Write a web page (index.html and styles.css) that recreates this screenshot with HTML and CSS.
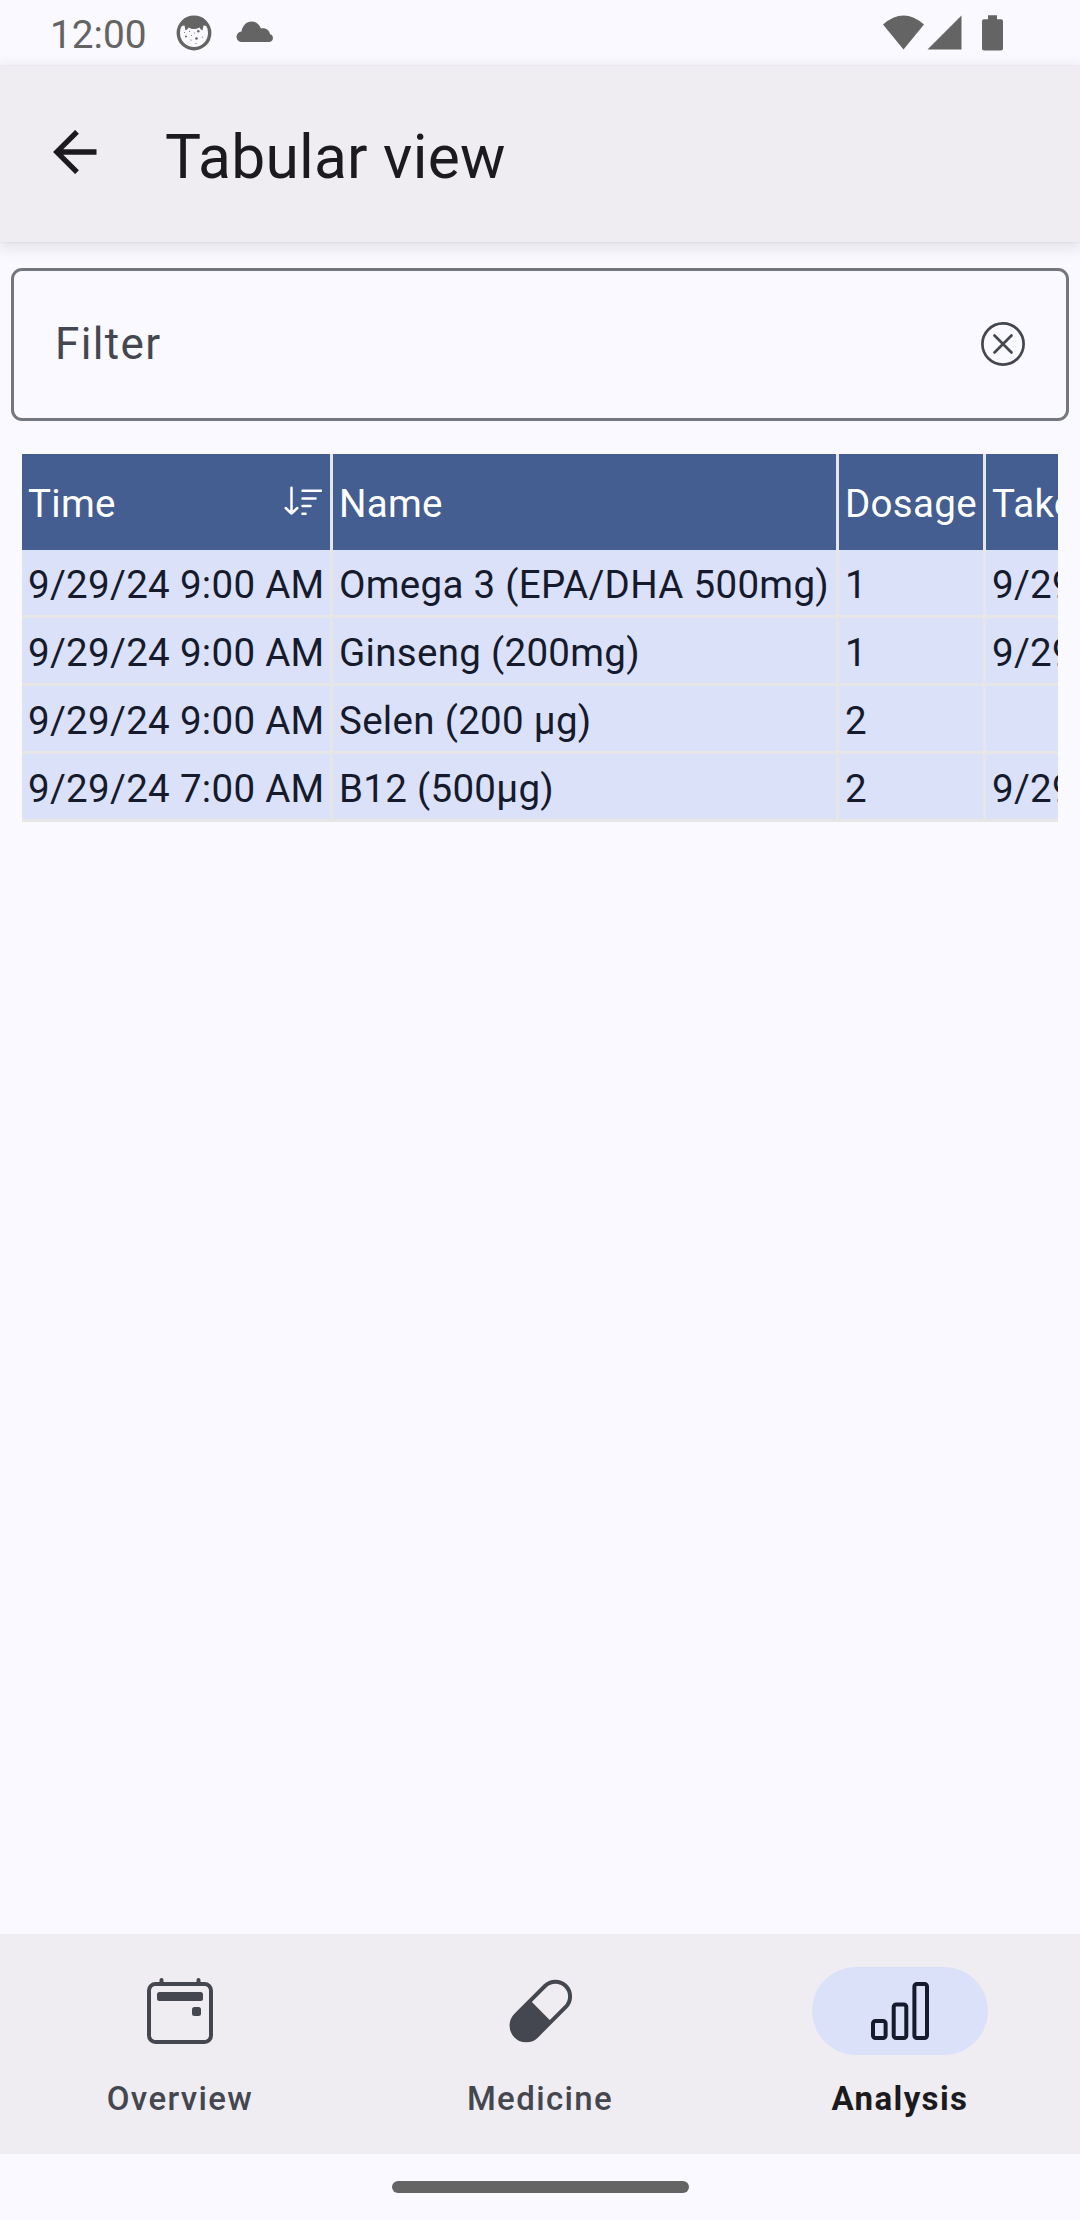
FILE: index.html
```html
<!DOCTYPE html>
<html lang="en">
<head>
<meta charset="utf-8">
<title>Tabular view</title>
<link rel="stylesheet" href="styles.css">
</head>
<body>
<header class="status">
  <span class="clock">12:00</span>
  <svg class="status-face" width="36" height="36" viewBox="0 0 36 36">
    <circle cx="18" cy="18" r="15.7" fill="none" stroke="#646464" stroke-width="3.4"/>
    <path d="M6 11C7 1 29 1 30 11L27.500 10.500L26.500 15.500L24.500 14L23.500 12.500Q18 15.500 12.500 12.500L11.500 14L9.500 15.500L8.500 10.500Z" fill="#646464"/>
    <g fill="#646464"><circle cx="10" cy="21.500" r="1"/><circle cx="20.500" cy="23.500" r="1.300"/><circle cx="22.300" cy="16.300" r="1.200"/><circle cx="15" cy="25" r=".6"/><circle cx="26.500" cy="22" r=".6"/><circle cx="8.500" cy="17.500" r=".5"/><circle cx="18.500" cy="18" r=".5"/><circle cx="13.500" cy="16.500" r=".6"/><circle cx="15.500" cy="20.500" r=".5"/><circle cx="20" cy="28.500" r=".6"/></g>
  </svg>
  <svg class="status-cloud" width="38" height="22" viewBox="0 0 38 22"><path d="M6 21A5.200 5.200 0 0 1 5.500 10.500C6.500 4.500 10.500.500 15.500.500C20 .500 23.500 3.500 25 7.500C30 6.500 33.500 9.500 34 13.200A4 4 0 0 1 33.500 21Z" fill="#646464"/></svg>
  <svg class="status-system" width="122" height="38" viewBox="0 0 122 38" fill="#646464">
    <path d="M1 10.500Q21.500-7.500 42 10.500L21.500 35.500Z"/>
    <path d="M45.500 35.500L79.500 1.500V35.500Z"/>
    <path d="M106 1.200h9v4h4a2 2 0 0 1 2 2V34.500a2 2 0 0 1-2 2h-17a2 2 0 0 1-2-2V7.200a2 2 0 0 1 2-2h4z"/>
  </svg>
</header>
<div class="appbar">
  <svg class="back" width="44" height="44" viewBox="0 0 44 44" fill="none" stroke="#1b1b1f" stroke-width="5.300"><path d="M43.500 22H4M24 1.800L3.800 22L24 42.200"/></svg>
  <h1 class="title">Tabular view</h1>
</div>
<main class="content">
  <div class="filter">
    <span class="filter-label">Filter</span>
    <svg class="clear" width="44" height="44" viewBox="0 0 44 44" fill="none" stroke="#44474f" stroke-width="2.700" stroke-linecap="round"><circle cx="22" cy="22" r="20.600"/><path d="M13.500 13.500L30.500 30.500M30.500 13.500L13.500 30.500"/></svg>
  </div>
  <div class="table-view">
    <table class="grid">
      <colgroup><col class="col-time"><col class="col-name"><col class="col-dosage"><col class="col-taken"></colgroup>
      <thead>
        <tr>
          <th><div class="sorted">Time<svg class="sort-icon" width="38" height="30" viewBox="0 0 38 30" fill="none" stroke="#fff" stroke-width="2.500" stroke-linecap="round" stroke-linejoin="round"><path d="M7.500 1.700V27.500M1.700 22L7.500 27.500L13.300 22M18.500 4.700H37M18.500 12.400H31.500M18.500 20H26.500M18.500 27.700H21.500"/></svg></div></th>
          <th>Name</th><th>Dosage</th><th>Taken</th>
        </tr>
      </thead>
      <tbody>
        <tr><td>9/29/24 9:00 AM</td><td>Omega 3 (EPA/DHA 500mg)</td><td>1</td><td>9/29/24</td></tr>
        <tr><td>9/29/24 9:00 AM</td><td>Ginseng (200mg)</td><td>1</td><td>9/29/24</td></tr>
        <tr><td>9/29/24 9:00 AM</td><td>Selen (200 µg)</td><td>2</td><td></td></tr>
        <tr><td>9/29/24 7:00 AM</td><td>B12 (500µg)</td><td>2</td><td>9/29/24</td></tr>
      </tbody>
    </table>
  </div>
</main>
<nav class="nav">
  <div class="nav-item">
    <div class="nav-icon"><svg width="66" height="66" viewBox="0 0 66 66"><rect x="2" y="6" width="62" height="58" rx="6.500" fill="none" stroke="#44474f" stroke-width="4"/><path d="M14.500 2V6M51.500 2V6" stroke="#44474f" stroke-width="4" stroke-linecap="round"/><rect x="10" y="14" width="46" height="9" rx="2.500" fill="#44474f"/><rect x="45" y="29" width="9" height="9" rx="2.500" fill="#44474f"/></svg></div>
    <span class="nav-label">Overview</span>
  </div>
  <div class="nav-item">
    <div class="nav-icon"><svg width="66" height="66" viewBox="0 0 66 66"><g transform="translate(33.800 33) rotate(45)"><rect x="-14.700" y="-35.300" width="29.400" height="70.600" rx="14.700" fill="none" stroke="#44474f" stroke-width="4"/><path d="M-14.700 0H14.700V20.600A14.700 14.700 0 0 1-14.700 20.600Z" fill="#44474f"/></g></svg></div>
    <span class="nav-label">Medicine</span>
  </div>
  <div class="nav-item active">
    <div class="nav-icon"><svg width="66" height="66" viewBox="0 0 66 66" fill="none" stroke="#151b2c" stroke-width="4"><rect x="6" y="43" width="12.600" height="17" rx="2.500"/><rect x="26.700" y="26.500" width="12.600" height="33.500" rx="2.500"/><rect x="47.400" y="6" width="12.600" height="54" rx="2.500"/></svg></div>
    <span class="nav-label">Analysis</span>
  </div>
</nav>
<footer class="gesture"><div class="handle"></div></footer>
</body>
</html>
```
FILE: styles.css
```css
* { box-sizing: border-box; }
body {
  margin: 0;
  width: 1080px;
  height: 2220px;
  display: flex;
  flex-direction: column;
  background: #faf9ff;
  color: #1b1b1f;
  font-family: Roboto, "Noto Sans", sans-serif;
  overflow: hidden;
}
svg { display: block; flex: none; }
.status {
  height: 66px;
  display: flex;
  align-items: flex-start;
  padding: 0 76px 0 50px;
  color: #646464;
}
.clock { width: 126px; font-size: 38.8px; line-height: 46px; padding-top: 12px; }
.status-face { margin-top: 15px; }
.status-cloud { margin: 21px 0 0 24px; }
.status-system { margin: 14px 0 0 auto; }
.appbar {
  height: 176px;
  display: flex;
  align-items: center;
  padding-left: 53px;
  background: #efedf1;
  box-shadow: 0 0 2px rgba(0, 0, 0, .08), 0 4px 14px 2px rgba(0, 0, 0, .1);
}
.back { margin-bottom: 4px; }
.title {
  margin: 0;
  padding: 8px 0 0 68px;
  font-size: 60.5px;
  line-height: 72px;
  font-weight: 400;
  letter-spacing: .25px;
}
.content { flex: 1; padding: 26px 11px 0; }
.filter {
  height: 153px;
  display: flex;
  align-items: center;
  justify-content: space-between;
  padding: 0 41px 2px;
  border: 3px solid #74777f;
  border-radius: 11px;
}
.filter-label { font-size: 44px; letter-spacing: 1.375px; color: #44474f; }
.table-view { margin: 33px 11px 0; overflow: hidden; }
.grid {
  width: 1269px;
  table-layout: fixed;
  border-spacing: 0;
  font-size: 38.5px;
  line-height: 45px;
  letter-spacing: .3px;
  color: #151b2c;
}
.col-time { width: 311px; }
.col-name { width: 506px; }
.col-dosage { width: 147px; }
.col-taken { width: 305px; }
.grid th, .grid td {
  text-align: left;
  vertical-align: middle;
  white-space: nowrap;
  border-right: 3px solid #e6e6e6;
}
.grid th {
  height: 96px;
  padding: 2px 6px 0;
  font-weight: 400;
  color: #fff;
  background: #445e91;
  background-clip: padding-box;
}
.grid td {
  height: 68px;
  padding: 3px 6px 0;
  background: #dce1fa;
  background-clip: padding-box;
  border-bottom: 3px solid #e6e6e6;
}
.sorted { display: flex; align-items: center; justify-content: space-between; }
.sort-icon { margin: 0 2px 4px 0; }
.nav {
  height: 220px;
  display: grid;
  grid-template-columns: repeat(3, 1fr);
  background: #efedf1;
}
.nav-item {
  display: flex;
  flex-direction: column;
  align-items: center;
  padding-top: 33px;
  color: #44474f;
}
.nav-icon {
  width: 176px;
  height: 88px;
  display: flex;
  align-items: center;
  justify-content: center;
  border-radius: 44px;
}
.nav-label {
  margin-top: 24px;
  font-size: 33px;
  line-height: 40px;
  font-weight: 500;
  letter-spacing: 1.375px;
}
.active { color: #1b1b1f; }
.active .nav-icon { background: #dce1fa; }
.active .nav-label { font-weight: 700; }
.gesture { height: 66px; display: flex; justify-content: center; padding-top: 27px; }
.handle { width: 297px; height: 12px; border-radius: 6px; background: #646464; }
```
